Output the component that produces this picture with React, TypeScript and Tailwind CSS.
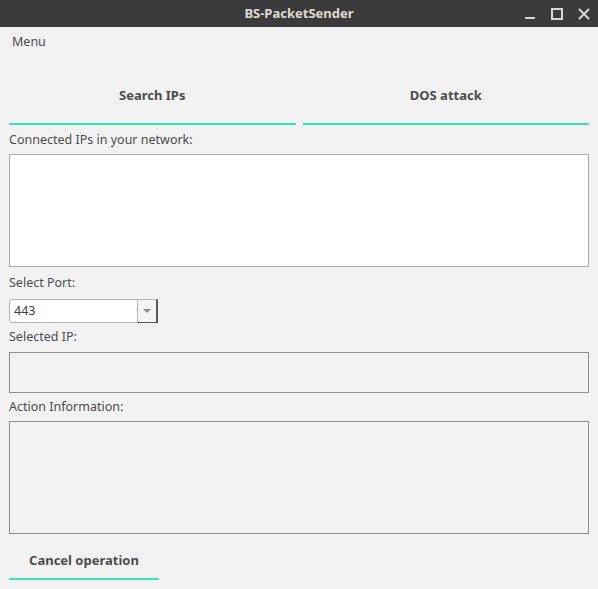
import React from "react";

export default function App() {
  const font = { fontFamily: '"Noto Sans", "DejaVu Sans", sans-serif' };
  return (
    <div className="w-[598px] h-[589px] bg-[#f2f2f2] flex flex-col overflow-hidden text-[#4c4c4c]" style={font}>
      {/* Title bar */}
      <div className="h-[27px] bg-[#3b3b3b] relative flex items-center justify-center shrink-0">
        <span className="text-[13px] font-bold text-[#dfdbd2] leading-none">BS-PacketSender</span>
        <div className="absolute right-0 top-0 h-[27px] flex items-center">
          <svg width="14" height="14" viewBox="0 0 14 14" className="mr-[13px]">
            <rect x="2" y="10" width="10" height="2" fill="#d6d6d6" />
          </svg>
          <svg width="14" height="14" viewBox="0 0 14 14" className="mr-[13px]">
            <rect x="2" y="2" width="10" height="10" fill="none" stroke="#d6d6d6" strokeWidth="2" />
          </svg>
          <svg width="14" height="14" viewBox="0 0 14 14" className="mr-[7px]">
            <path d="M2 2 L12 12 M12 2 L2 12" stroke="#d6d6d6" strokeWidth="2" />
          </svg>
        </div>
      </div>

      {/* Menu */}
      <div className="h-[28px] flex items-center pl-[12px] pt-[2px] text-[12.5px] text-[#4c4c4c] shrink-0">Menu</div>

      {/* Tab buttons */}
      <div className="flex gap-[7px] px-[9px] mt-[12px]">
        <div className="flex-1 flex flex-col">
          <div className="h-[56px] pt-[1px] flex items-center justify-center text-[13px] font-bold text-[#4c4c4c]">Search IPs</div>
          <div className="h-[2px] bg-[#33e8b5]" />
        </div>
        <div className="flex-1 flex flex-col">
          <div className="h-[56px] pt-[1px] flex items-center justify-center text-[13px] font-bold text-[#4c4c4c]">DOS attack</div>
          <div className="h-[2px] bg-[#33e8b5]" />
        </div>
      </div>

      <div className="px-[9px] flex flex-col text-[12.5px]">
        <div className="h-[28px] flex items-center mt-[1px]">Connected IPs in your network:</div>
        <div className="h-[113px] bg-white border border-[#ababab]" />

        <div className="h-[31px] flex items-center mt-[1px]">Select Port:</div>
        <div className="w-[149px] h-[24px] flex items-stretch">
          <div className="flex-1 bg-white border border-[#b4b4b4] rounded-l-[3px] flex items-center pl-[4px] text-[#3c3c3c]">443</div>
          <div className="w-[20px] bg-[#f4f4f4] border-y border-[#b4b4b4] border-r-[2px] border-r-[#5a5a5a] border-b-[#5a5a5a] flex items-center justify-center">
            <svg width="8" height="5" viewBox="0 0 8 5">
              <path d="M0 0 L8 0 L4 4 Z" fill="#8a8a8a" />
            </svg>
          </div>
        </div>

        <div className="h-[29px] flex items-center">Selected IP:</div>
        <div className="h-[41px] border border-[#8e8e8e]" />

        <div className="h-[28px] flex items-center">Action Information:</div>
        <div className="h-[113px] border border-[#8e8e8e]" />

        <div className="w-[150px] flex flex-col mt-[13px]">
          <div className="h-[28px] flex items-center justify-center text-[13px] font-bold text-[#4c4c4c]">Cancel operation</div>
          <div className="h-[2px] bg-[#33e8b5] mt-[3px]" />
        </div>
      </div>
    </div>
  );
}
